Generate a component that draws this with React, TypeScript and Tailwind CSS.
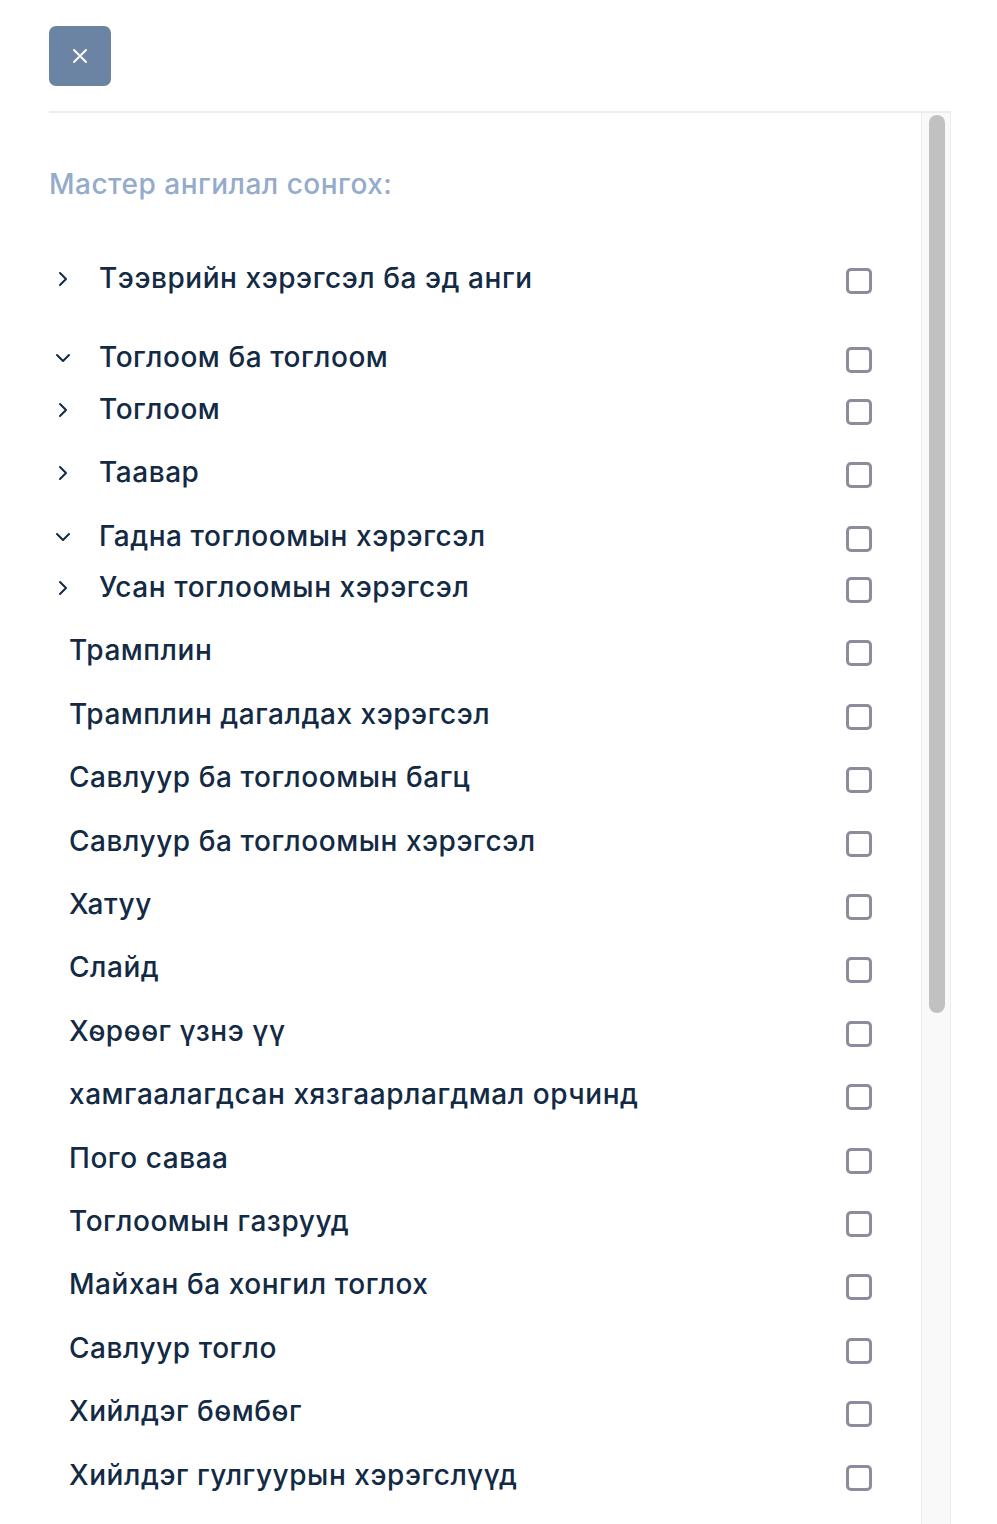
import React from "react";

type TRow = {
    label: string;
    chevron?: "right" | "down";
    height: string;
};

const rows: TRow[] = [
    {label: "Тээврийн хэрэгсэл ба эд анги", chevron: "right", height: "h-[79px]"},
    {label: "Тоглоом ба тоглоом", chevron: "down", height: "h-[52px]"},
    {label: "Тоглоом", chevron: "right", height: "h-[63px]"},
    {label: "Таавар", chevron: "right", height: "h-[64px]"},
    {label: "Гадна тоглоомын хэрэгсэл", chevron: "down", height: "h-[51px]"},
    {label: "Усан тоглоомын хэрэгсэл", chevron: "right", height: "h-[63px]"},
    {label: "Трамплин", height: "h-[64px]"},
    {label: "Трамплин дагалдах хэрэгсэл", height: "h-[63px]"},
    {label: "Савлуур ба тоглоомын багц", height: "h-[64px]"},
    {label: "Савлуур ба тоглоомын хэрэгсэл", height: "h-[63px]"},
    {label: "Хатуу", height: "h-[63px]"},
    {label: "Слайд", height: "h-[64px]"},
    {label: "Хөрөөг үзнэ үү", height: "h-[63px]"},
    {label: "хамгаалагдсан хязгаарлагдмал орчинд", height: "h-[64px]"},
    {label: "Пого саваа", height: "h-[63px]"},
    {label: "Тоглоомын газрууд", height: "h-[63px]"},
    {label: "Майхан ба хонгил тоглох", height: "h-[64px]"},
    {label: "Савлуур тогло", height: "h-[63px]"},
    {label: "Хийлдэг бөмбөг", height: "h-[64px]"},
    {label: "Хийлдэг гулгуурын хэрэгслүүд", height: "h-[63px]"},
];

function Chevron({dir}: {dir: "right" | "down"}) {
    return (
        <svg width="20" height="20" viewBox="0 0 20 20" fill="none" stroke="#132a45" strokeWidth="2" strokeLinecap="round" strokeLinejoin="round">
            {dir === "right"
                ? <path d="M6 4 L12 10 L6 16"/>
                : <path d="M3 7 L9 13 L15 7"/>}
        </svg>
    );
}

function Checkbox() {
    return <div className="w-[26px] h-[26px] rounded-[5px] border-[3px] border-[#8e8c9c] bg-white"></div>;
}

function App() {
    return (
        <div className="w-[997px] h-[1524px] overflow-hidden bg-white pl-[49px] pr-[46px] pt-[26px]" style={{fontFamily: "Inter, 'Noto Sans', sans-serif"}}>
            <button className="w-[62px] h-[60px] rounded-[7px] bg-[#6b84a3] flex items-center justify-center">
                <svg width="18" height="18" viewBox="0 0 18 18" stroke="white" strokeWidth="2" strokeLinecap="round">
                    <path d="M3 3 L15 15 M15 3 L3 15"/>
                </svg>
            </button>

            <div className="mt-[25px] flex border-t-2 border-[#ededed] h-[1500px]">
                <div className="flex-1 pt-[55px]">
                    <div className="text-[28px] leading-[32px] font-medium tracking-[0.5px] text-[#95abcb]">Мастер ангилал сонгох:</div>

                    <div className="mt-[61px]">
                        {rows.map((row) => (
                            <div key={row.label} className={`${row.height} flex items-start`}>
                                <div className="h-[40px] w-full flex items-center">
                                    {row.chevron
                                        ? <div className="w-[50px] pl-[5px] flex items-center shrink-0 -mt-[4px]"><Chevron dir={row.chevron}/></div>
                                        : <div className="w-[20px] shrink-0"></div>}
                                    <span className="flex-1 text-[28px] leading-[32px] font-medium tracking-[0.55px] text-[#132a45] -mt-[6px]">{row.label}</span>
                                    <div className="mr-[49px]"><Checkbox/></div>
                                </div>
                            </div>
                        ))}
                    </div>
                </div>

                <div className="w-[30px] border-l border-r border-[#ececec] bg-[#f9f9f9] pl-[7px] pt-[2px]">
                    <div className="w-[16px] h-[898px] rounded-full bg-[#c1c1c1]"></div>
                </div>
            </div>
        </div>
    );
}

export default App;
